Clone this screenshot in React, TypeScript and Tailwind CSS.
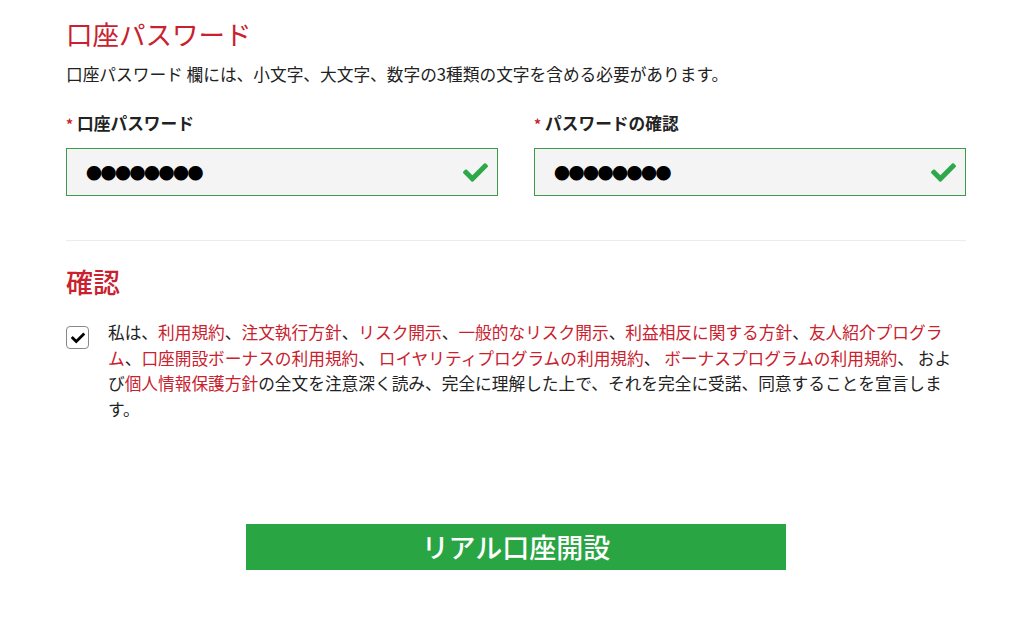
import { FaCheck } from "react-icons/fa";

const RED = "text-[#c9212e]";

function PasswordField({ label }: { label: string }) {
  return (
    <div className="flex-1">
      <label className="block text-[16.7px] font-bold text-[#222] leading-[24px]">
        <span className={`${RED} mr-1 text-[14px]`}>*</span>
        {label}
      </label>
      <div className="mt-[12px] h-[48px] flex items-center justify-between border border-[#3c9a4a] bg-[#f4f4f4] pl-[19px] pr-[9px]">
        <span className="text-[16px] tracking-[-1.5px] text-black">●●●●●●●●</span>
        <FaCheck className="text-[#2da84a]" size={25} />
      </div>
    </div>
  );
}

const Link = ({ children }: { children: React.ReactNode }) => (
  <span className={RED}>{children}</span>
);

export default function App() {
  return (
    <div
      className="w-[1023px] h-[624px] bg-white overflow-hidden"
      style={{ fontFamily: '"Noto Sans CJK JP", "Liberation Sans", sans-serif' }}
    >
      <div className="w-[900px] ml-[66px] pt-[14px]">
        {/* Account password */}
        <h2 className={`text-[26.5px] leading-[40px] ${RED}`}>口座パスワード</h2>
        <p className="mt-[8px] text-[16.7px] leading-[24px] text-[#222]">
          口座パスワード 欄には、小文字、大文字、数字の3種類の文字を含める必要があります。
        </p>
        <div className="mt-[25px] flex gap-[36px]">
          <PasswordField label="口座パスワード" />
          <PasswordField label="パスワードの確認" />
        </div>

        <div className="mt-[44px] border-t border-[#ececec]" />

        {/* Confirmation */}
        <h2 className={`mt-[21px] text-[27px] leading-[40px] font-medium ${RED}`}>確認</h2>
        <div className="mt-[18px] flex items-start">
          <div className="mt-[6px] w-[23px] h-[23px] shrink-0 rounded-[4px] border border-[#888] bg-white flex items-center justify-center">
            <FaCheck size={14} className="text-black" />
          </div>
          <p className="ml-[19px] w-[848px] text-[16.7px] leading-[25.7px] text-[#222]">
            私は、<Link>利用規約</Link>、<Link>注文執行方針</Link>、<Link>リスク開示</Link>、
            <Link>一般的なリスク開示</Link>、<Link>利益相反に関する方針</Link>、
            <Link>友人紹介プログラム</Link>、<Link>口座開設ボーナスの利用規約</Link>、{" "}
            <Link>ロイヤリティプログラムの利用規約</Link>、{" "}
            <Link>ボーナスプログラムの利用規約</Link>、 および
            <Link>個人情報保護方針</Link>
            の全文を注意深く読み、完全に理解した上で、それを完全に受諾、同意することを宣言します。
          </p>
        </div>

        <div className="mt-[101px] flex justify-center">
          <button className="w-[540px] h-[46px] bg-[#2aa544] text-white text-[27px] font-medium leading-none">
            リアル口座開設
          </button>
        </div>
      </div>
    </div>
  );
}
